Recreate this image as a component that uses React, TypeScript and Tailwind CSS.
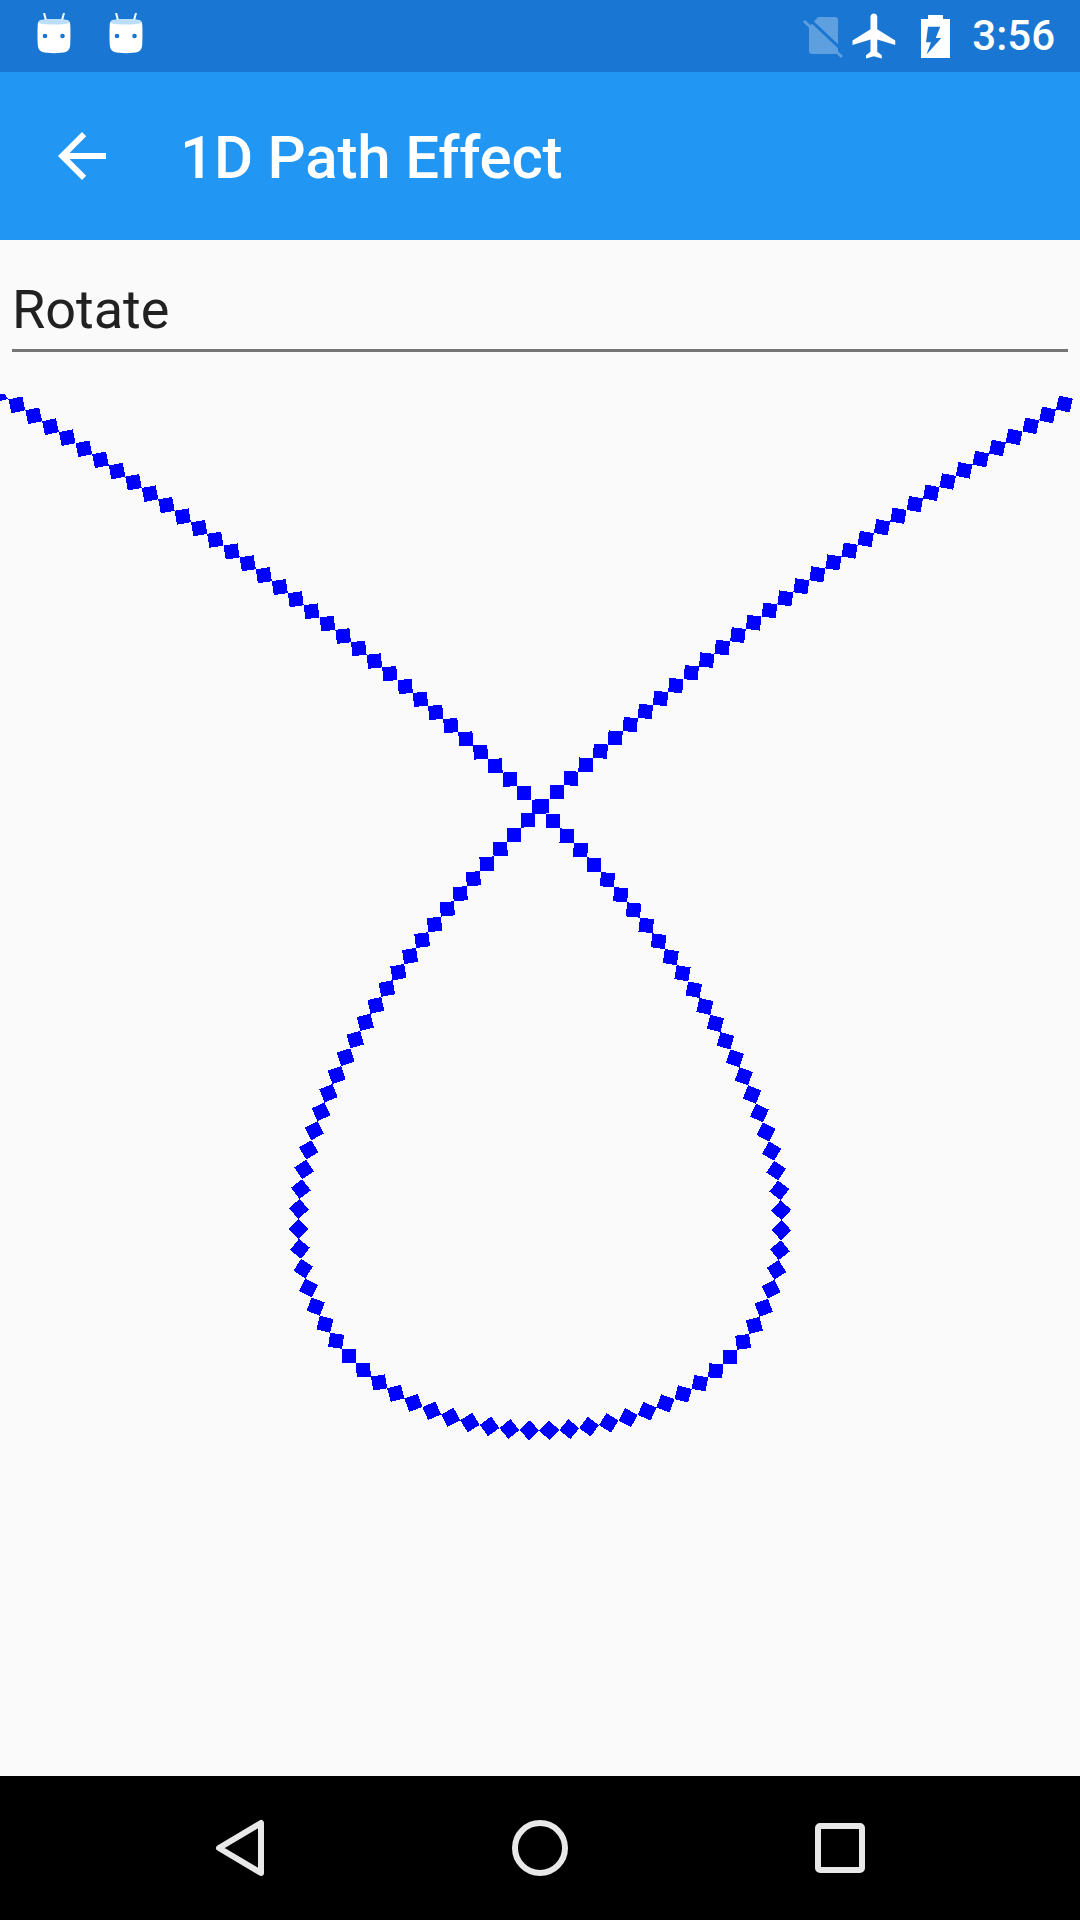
const W = 1080;
const TOP = 352; // canvas starts under the picker
const START_Y = 394 - TOP;
const CTRL_Y = 1776 - TOP;
const SPACING = 20;
const R = 10;

function bezier(t: number) {
  const m = 1 - t;
  const x = 3 * t * m * m * (2 * W) + 3 * t * t * m * -W + t * t * t * W;
  const y =
    m * m * m * START_Y + 3 * t * m * m * CTRL_Y + 3 * t * t * m * CTRL_Y + t * t * t * START_Y;
  return [x, y];
}

// walk the curve by arc length and drop a diamond every SPACING px
function buildDiamonds() {
  const out: string[] = [];
  const steps = 40000;
  let [px, py] = bezier(0);
  let walked = 0;
  let next = SPACING; // the first stamp is only a stub, drawn by hand below
  for (let i = 1; i <= steps; i++) {
    const [x, y] = bezier(i / steps);
    const d = Math.hypot(x - px, y - py);
    if (walked + d >= next) {
      const ux = (x - px) / d;
      const uy = (y - py) / d;
      const pts = [
        [x + ux * R, y + uy * R],
        [x - uy * R, y + ux * R],
        [x - ux * R, y - uy * R],
        [x + uy * R, y - ux * R],
      ];
      out.push(pts.map((p) => p[0].toFixed(2) + "," + p[1].toFixed(2)).join(" "));
      next += SPACING;
    }
    walked += d;
    px = x;
    py = y;
  }
  return out;
}

const diamonds = buildDiamonds();

const AndroidHead = () => (
  <svg width="36" height="42" viewBox="0 0 36 42" className="block">
    <path d="M8 0l2.500 9M28 0l-2.500 9" stroke="#fff" strokeWidth="2" fill="none" />
    <path d="M5 7c5-1.500 21-1.500 26 0 2 .6 3 2 3.200 4 .4 5 .4 14 0 21-.3 4-2 6-4.500 7-5 1.500-18.400 1.500-23.400 0C3.800 38 2.100 36 1.800 32c-.4-7-.4-16 0-21C2 9 3 7.600 5 7z" fill="#fff" />
    <path d="M2.400 9.500C3 8.300 3.800 7.400 5 7c5-1.500 21-1.500 26 0 1.200.4 2 1.300 2.600 2.500-2 2.800-29.200 2.800-31.200 0z" fill="#bbdefb" />
    <circle cx="9" cy="23" r="2.300" fill="#1976d2" />
    <circle cx="26.500" cy="23" r="2.300" fill="#1976d2" />
  </svg>
);

export default function App() {
  return (
    <div className="w-[1080px] h-[1920px] flex flex-col bg-[#fafafa] overflow-hidden font-['Roboto',sans-serif]">
      <div className="h-[72px] shrink-0 bg-[#1976d2] flex items-center pl-[36px] pr-[25px] text-white">
        <div className="flex items-center gap-[36px] mt-[-4px]">
          <AndroidHead />
          <AndroidHead />
        </div>
        <div className="ml-auto flex items-center">
          <svg width="40" height="42" viewBox="0 0 40 42" className="block mt-[4px]">
            <path d="M15 0h17a3 3 0 0 1 3 3v31a3 3 0 0 1-3 3H9a3 3 0 0 1-3-3V10z" fill="#5e9fdf" />
            <path d="M4 0l36 34" stroke="#1976d2" strokeWidth="3" />
            <path d="M1 4l38 36" stroke="#5e9fdf" strokeWidth="3" />
          </svg>
          <svg width="54" height="54" viewBox="0 0 24 24" className="block ml-[5px] mt-[-1px]" fill="#fff">
            <path d="M21 16v-2l-8-5V3.500c0-.83-.67-1.500-1.500-1.500S10 2.670 10 3.500V9l-8 5v2l8-2.500V19l-2 1.500V22l3.500-1 3.500 1v-1.500L13 19v-5.500l8 2.500z" />
          </svg>
          <svg width="29" height="43" viewBox="0 0 29 43" className="block ml-[19px]">
            <path
              fill="#fff"
              fillRule="evenodd"
              d="M7 0h15v4h7v39H0V4h7zM7 11.700h12.300l-4.600 11.300h5.600L5.500 39.500 10 27.300H5z"
            />
          </svg>
          <span className="ml-[22px] text-[42px] leading-none font-medium">3:56</span>
        </div>
      </div>

      <div className="h-[168px] shrink-0 bg-[#2196f3] flex items-center pl-[46px] text-white">
        <svg width="72" height="72" viewBox="0 0 24 24" fill="#fff" className="block">
          <path d="M20 11H7.830l5.590-5.590L12 4l-8 8 8 8 1.410-1.410L7.830 13H20v-2z" />
        </svg>
        <span className="ml-[62px] pt-[4px] text-[60px] leading-none font-medium tracking-[-0.2px]">1D Path Effect</span>
      </div>

      <div className="h-[112px] shrink-0 px-[12px]">
        <div className="h-full pt-[30px] border-b-[3px] border-[#757575] flex items-center text-[54px] leading-none text-[#212121]">
          Rotate
        </div>
      </div>

      <svg viewBox={"0 0 1080 " + (1776 - TOP)} className="block w-full flex-1" shapeRendering="crispEdges">
        <polygon points="0,42.500 5,42 8,47 0,49" fill="#0000ff" />
        {diamonds.map((pts, i) => (
          <polygon key={i} points={pts} fill="#0000ff" />
        ))}
      </svg>

      <div className="h-[144px] shrink-0 bg-black flex items-center">
        <svg width="1080" height="144" viewBox="0 0 1080 144" fill="none" stroke="#e8e8e8" strokeWidth="6" strokeLinejoin="round" className="block">
          <path d="M261 47v50l-42-25z" />
          <circle cx="540" cy="72" r="25" />
          <rect x="818" y="50" width="44" height="44" rx="2" />
        </svg>
      </div>
    </div>
  );
}
